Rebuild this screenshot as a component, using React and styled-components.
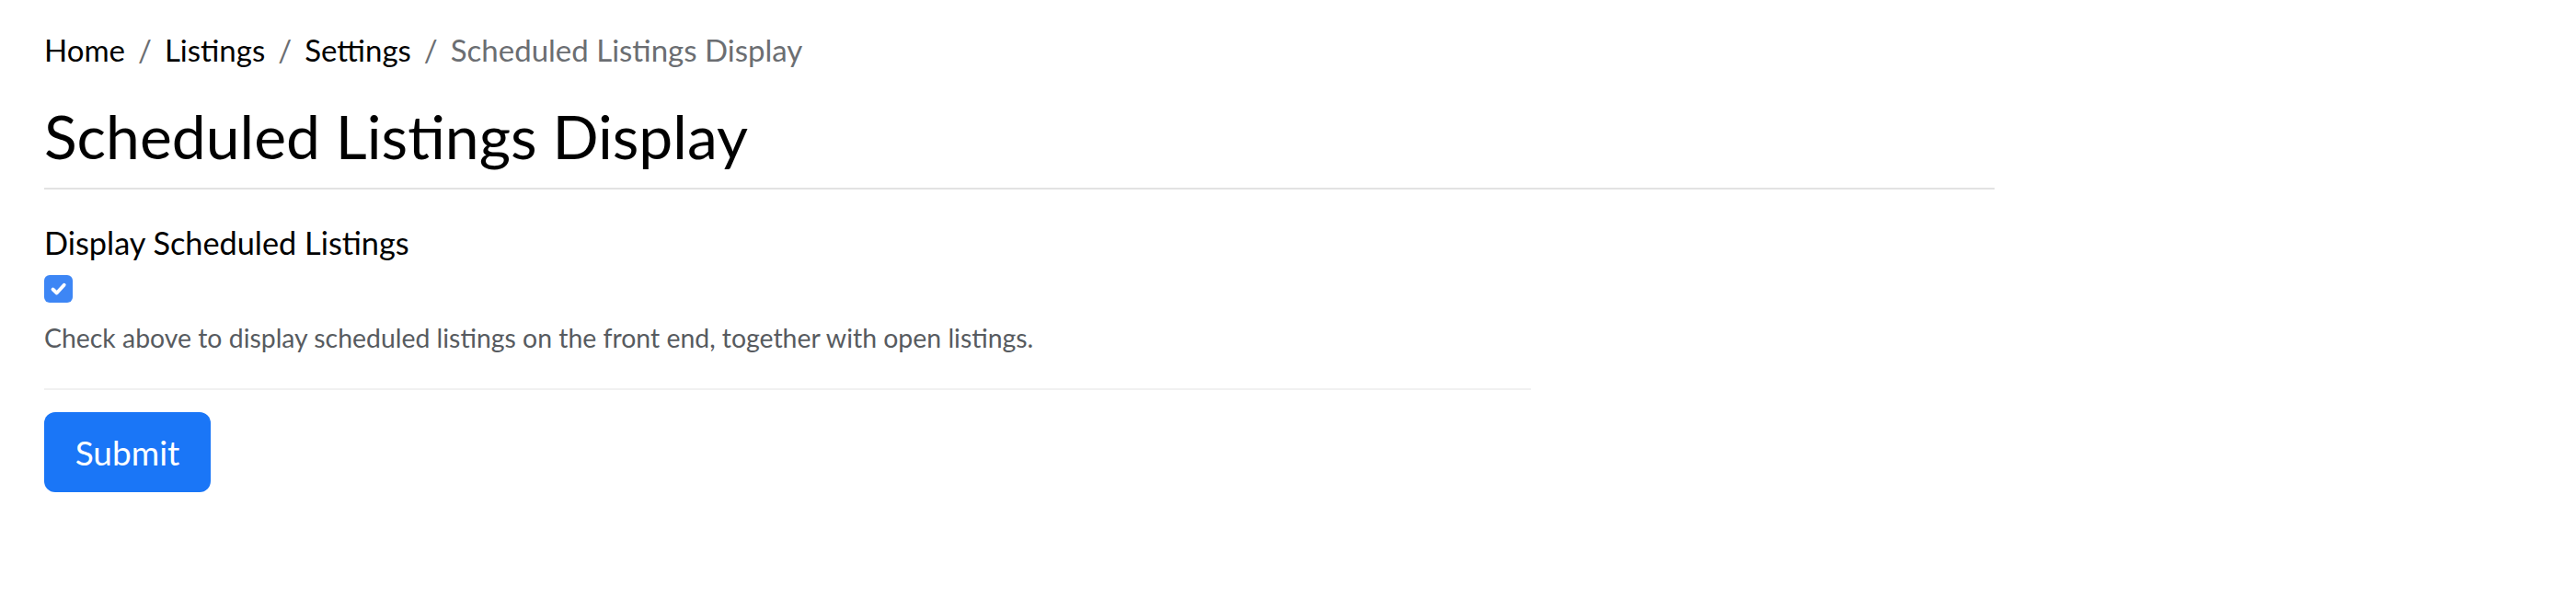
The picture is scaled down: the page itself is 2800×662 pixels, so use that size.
import React, { useState } from "react"
import styled, { createGlobalStyle } from "styled-components"

const GlobalStyle = createGlobalStyle`
  body {
    margin: 0;
    background: #fff;
    font-family: Lato, "Open Sans", sans-serif;
    color: #000;
  }
`

const crumbs = ["Home", "Listings", "Settings"]

const App = () => {
  const [checked, setChecked] = useState(true)

  return (
    <Page>
      <GlobalStyle />
      <Breadcrumb>
        {crumbs.map((c) => (
          <Crumb key={c}>
            <CrumbLink href='#'>{c}</CrumbLink>
            <Sep>/</Sep>
          </Crumb>
        ))}
        <Crumb active>Scheduled Listings Display</Crumb>
      </Breadcrumb>

      <Title>Scheduled Listings Display</Title>

      <Form onSubmit={(e) => e.preventDefault()}>
        <Label htmlFor='display-scheduled'>Display Scheduled Listings</Label>
        <CheckBox
          id='display-scheduled'
          type='button'
          role='checkbox'
          aria-checked={checked}
          checked={checked}
          onClick={() => setChecked(!checked)}
        >
          {checked && (
            <svg width='31' height='30' viewBox='0 0 31 30'>
              <path
                d='M9.5 15.5l4.2 4 8-8.8'
                fill='none'
                stroke='#fff'
                strokeWidth='3.8'
                strokeLinecap='round'
                strokeLinejoin='round'
              />
            </svg>
          )}
        </CheckBox>
        <Help>
          Check above to display scheduled listings on the front end, together
          with open listings.
        </Help>
        <Divider />
        <SubmitBtn type='submit'>Submit</SubmitBtn>
      </Form>
    </Page>
  )
}

const Page = styled.div`
  padding: 30px 0 0 48px;
`

const Breadcrumb = styled.ol`
  display: flex;
  list-style: none;
  margin: 0;
  padding: 0;
  font-size: 33px;
  line-height: 48px;
`

const Crumb = styled.li`
  display: flex;
  color: ${(p) => (p.active ? "#6b6e72" : "#000")};
`

const CrumbLink = styled.a`
  color: #000;
  text-decoration: none;
`

const Sep = styled.span`
  color: #6b6e72;
  padding: 0 14px;
`

const Title = styled.h1`
  width: 2120px;
  margin: 30px 0 0;
  padding-bottom: 16px;
  font-size: 66px;
  font-weight: 400;
  line-height: 80px;
  border-bottom: 2px solid #e2e2e2;
`

const Form = styled.form`
  display: flex;
  flex-direction: column;
  align-items: flex-start;
  width: 1616px;
  padding-top: 35px;
`

const Label = styled.label`
  font-size: 34.3px;
  line-height: 46px;
`

const CheckBox = styled.button`
  display: grid;
  place-items: center;
  width: 31px;
  height: 30px;
  margin-top: 12px;
  padding: 0;
  border: none;
  border-radius: 6px;
  background: ${(p) => (p.checked ? "#3d86f5" : "#fff")};
  box-shadow: ${(p) => (p.checked ? "none" : "inset 0 0 0 2px #ccc")};
  cursor: pointer;

  svg {
    display: block;
  }
`

const Help = styled.p`
  margin: 18px 0 0;
  font-size: 28.4px;
  line-height: 40px;
  color: #575b60;
`

const Divider = styled.hr`
  align-self: stretch;
  margin: 35px 0 0;
  border: none;
  border-top: 2px solid #f1f1f1;
`

const SubmitBtn = styled.button`
  margin-top: 24px;
  width: 181px;
  height: 87px;
  border: none;
  border-radius: 12px;
  background: #1a76f7;
  color: #fff;
  font-family: inherit;
  font-size: 37px;
  cursor: pointer;
`

export default App
